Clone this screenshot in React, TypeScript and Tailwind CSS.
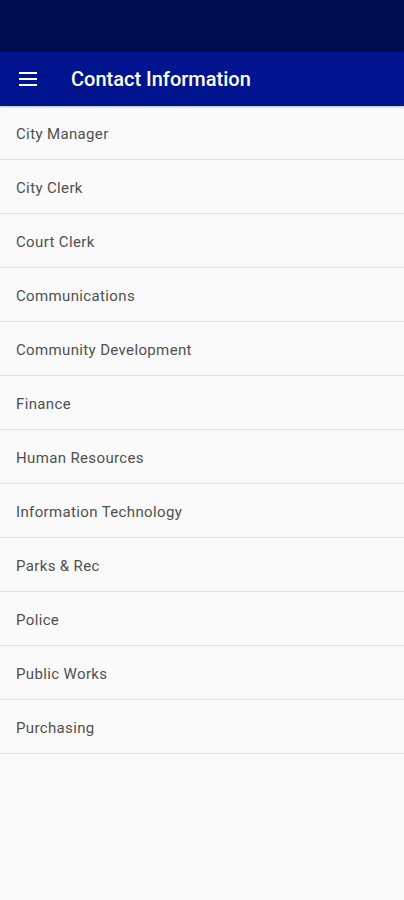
const items = [
  'City Manager',
  'City Clerk',
  'Court Clerk',
  'Communications',
  'Community Development',
  'Finance',
  'Human Resources',
  'Information Technology',
  'Parks & Rec',
  'Police',
  'Public Works',
  'Purchasing',
]

export default function App() {
  return (
    <div className="flex h-[900px] w-[404px] flex-col bg-[#fafafa] font-['Roboto',sans-serif]">
      <div className="h-[52px] bg-[#000c52]" />
      <header className="flex h-[54px] items-center bg-[#001490] shadow-[0_1px_2px_rgba(0,0,0,0.25)]">
        <button className="ml-[16px] flex h-[24px] w-[24px] items-center justify-center text-white">
          <svg width="20" height="14" viewBox="0 0 20 14" fill="currentColor">
            <rect x="1" y="0" width="18" height="2" />
            <rect x="1" y="6" width="18" height="2" />
            <rect x="1" y="12" width="18" height="2" />
          </svg>
        </button>
        <h1 className="ml-[31px] text-[20px] font-medium text-white">Contact Information</h1>
      </header>
      <ul>
        {items.map((item) => (
          <li
            key={item}
            className="flex h-[54px] items-center border-b border-[#e2e2e2] px-[16px] pt-[3px] text-[15px] tracking-[0.36px] text-[#505050]"
          >
            {item}
          </li>
        ))}
      </ul>
    </div>
  )
}
